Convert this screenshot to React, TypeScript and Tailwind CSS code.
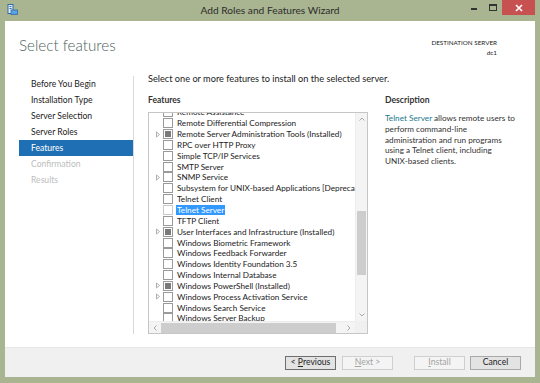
import React from "react";

type Row = { label: string; exp?: boolean; installed?: boolean; selected?: boolean };

const rows: Row[] = [
  { label: "Remote Assistance" },
  { label: "Remote Differential Compression" },
  { label: "Remote Server Administration Tools (Installed)", exp: true, installed: true },
  { label: "RPC over HTTP Proxy" },
  { label: "Simple TCP/IP Services" },
  { label: "SMTP Server" },
  { label: "SNMP Service", exp: true },
  { label: "Subsystem for UNIX-based Applications [Deprecated]" },
  { label: "Telnet Client" },
  { label: "Telnet Server", selected: true },
  { label: "TFTP Client" },
  { label: "User Interfaces and Infrastructure (Installed)", exp: true, installed: true },
  { label: "Windows Biometric Framework" },
  { label: "Windows Feedback Forwarder" },
  { label: "Windows Identity Foundation 3.5" },
  { label: "Windows Internal Database" },
  { label: "Windows PowerShell (Installed)", exp: true, installed: true },
  { label: "Windows Process Activation Service", exp: true },
  { label: "Windows Search Service" },
  { label: "Windows Server Backup" },
];

const navItems = [
  { label: "Before You Begin", state: "normal" },
  { label: "Installation Type", state: "normal" },
  { label: "Server Selection", state: "normal" },
  { label: "Server Roles", state: "normal" },
  { label: "Features", state: "active" },
  { label: "Confirmation", state: "disabled" },
  { label: "Results", state: "disabled" },
];

const font = { fontFamily: 'Lato, "Open Sans", "Liberation Sans", sans-serif' };

function Expander() {
  return (
    <svg width="6" height="7" viewBox="0 0 6 7" className="block">
      <path d="M1.5 1 L4.5 3.5 L1.5 6 Z" fill="none" stroke="#a6a6a6" strokeWidth="0.9" />
    </svg>
  );
}

function Checkbox({ installed, light }: { installed?: boolean; light?: boolean }) {
  return (
    <div
      className={`w-[10px] h-[10px] shrink-0 border bg-white flex items-center justify-center ${
        light ? "border-[#c9c9c9]" : "border-[#9a9a9a]"
      }`}
    >
      {installed && <div className="w-[6px] h-[6px] bg-[#7a7a7a]" />}
    </div>
  );
}

function WinButton({ children, kind }: { children: React.ReactNode; kind: "default" | "disabled" | "normal" }) {
  const cls =
    kind === "default"
      ? "border-[#6e6e6e] bg-[#e3e3e3] text-[#222]"
      : kind === "disabled"
      ? "border-[#cfcfcf] bg-[#f4f4f4] text-[#a3a3a3]"
      : "border-[#a9a9a9] bg-[#e3e3e3] text-[#222]";
  return (
    <div className={`w-[51px] h-[14px] border flex items-center justify-center text-[8.6px] leading-none ${cls}`}>
      {children}
    </div>
  );
}

export default function App() {
  return (
    <div className="w-[540px] h-[383px] bg-[#a9b491] flex flex-col overflow-hidden" style={font}>
      {/* Title bar */}
      <div className="h-[21px] shrink-0 relative flex items-center">
        <div className="absolute left-[7px] top-[4px]">
          <svg width="11" height="11" viewBox="0 0 11 11">
            <rect x="1" y="0.5" width="5" height="9" fill="#e8eef5" stroke="#2f6aa8" strokeWidth="1" />
            <line x1="2.5" y1="2.5" x2="4.5" y2="2.5" stroke="#2f6aa8" strokeWidth="1" />
            <line x1="2.5" y1="4.5" x2="4.5" y2="4.5" stroke="#2f6aa8" strokeWidth="1" />
            <rect x="4" y="6" width="6.5" height="4.5" fill="#5ba3e0" stroke="#2f6aa8" strokeWidth="0.8" />
          </svg>
        </div>
        <div className="flex-1 text-center text-[10.2px] text-[#2d2d2d] pt-[1px]">
          Add Roles and Features Wizard
        </div>
        <div className="absolute right-[5px] top-0 flex items-start">
          <div className="w-[19px] h-[15px] flex items-center justify-center">
            <div className="w-[6px] h-[2px] bg-[#333] mt-[2px]" />
          </div>
          <div className="w-[19px] h-[15px] flex items-center justify-center">
            <div className="w-[8px] h-[7px] border border-[#333] border-t-2" />
          </div>
          <div className="w-[33px] h-[15px] bg-[#c75050] flex items-center justify-center">
            <svg width="8" height="8" viewBox="0 0 8 8">
              <path d="M1 1 L7 7 M7 1 L1 7" stroke="#fff" strokeWidth="1.6" />
            </svg>
          </div>
        </div>
      </div>

      {/* Client */}
      <div className="flex-1 ml-[5px] mr-[5px] mb-[6px] bg-white flex flex-col">
        {/* Header */}
        <div className="h-[49px] shrink-0 flex justify-between pl-[14px] pr-[38px]">
          <div className="pt-[17px] text-[15.2px] font-light leading-none text-[#4e5f5a]">
            Select features
          </div>
          <div className="pt-[17px] text-right text-[6.3px] leading-[10px] text-[#222]">
            <div>DESTINATION SERVER</div>
            <div>dc1</div>
          </div>
        </div>

        {/* Body */}
        <div className="flex-1 flex">
          {/* Nav */}
          <div className="w-[129px] shrink-0 pl-[14px] pt-[6px] flex">
            <div className="flex-1 flex flex-col">
              {navItems.map((n) => (
                <div
                  key={n.label}
                  className={`h-[16px] flex items-center pl-[12px] text-[8.6px] ${
                    n.state === "active"
                      ? "bg-[#1f6fb5] text-white"
                      : n.state === "disabled"
                      ? "text-[#bdbdbd]"
                      : "text-[#222]"
                  }`}
                >
                  {n.label}
                </div>
              ))}
            </div>
            <div className="w-px bg-[#d9d9d9] mb-[13px]" />
          </div>

          {/* Main */}
          <div className="flex-1 flex flex-col pl-[14px]">
            <div className="pt-[3px] h-[21px] text-[9.2px] text-[#222] leading-[12px] whitespace-nowrap">
              Select one or more features to install on the selected server.
            </div>
            <div className="flex gap-[17px]">
              <div className="w-[220px] shrink-0 flex flex-col">
                <div className="h-[21px] text-[8.5px] font-bold text-[#333] leading-[12px] pt-[3px]">Features</div>
                {/* listbox */}
                <div className="h-[222px] border border-[#c6c6c6] flex flex-col">
                  <div className="flex-1 flex min-h-0">
                    <div className="flex-1 overflow-hidden">
                      <div className="mt-[-6px]">
                        {rows.map((r) => (
                          <div key={r.label} className="h-[10.85px] flex items-center whitespace-nowrap">
                            <div className="w-[14px] pl-[6px] shrink-0 flex items-center">
                              {r.exp && <Expander />}
                            </div>
                            <Checkbox installed={r.installed} light={r.selected} />
                            <span
                              className={`ml-[3px] px-[1px] text-[8.2px] leading-[10px] ${
                                r.selected ? "bg-[#3399ff] text-white" : "text-[#222]"
                              }`}
                            >
                              {r.label}
                            </span>
                          </div>
                        ))}
                      </div>
                    </div>
                    {/* vertical scrollbar */}
                    <div className="w-[12px] shrink-0 bg-[#f4f4f4] border-l border-[#ececec] flex flex-col">
                      <div className="h-[12px] flex items-center justify-center">
                        <svg width="6" height="4" viewBox="0 0 6 4">
                          <path d="M0.5 3.5 L3 1 L5.5 3.5" fill="none" stroke="#a0a0a0" strokeWidth="0.9" />
                        </svg>
                      </div>
                      <div className="h-[86px]" />
                      <div className="h-[64px] mx-[1px] bg-[#cdcdcd]" />
                      <div className="flex-1" />
                      <div className="h-[12px] flex items-center justify-center">
                        <svg width="6" height="4" viewBox="0 0 6 4">
                          <path d="M0.5 0.5 L3 3 L5.5 0.5" fill="none" stroke="#a0a0a0" strokeWidth="0.9" />
                        </svg>
                      </div>
                    </div>
                  </div>
                  {/* horizontal scrollbar */}
                  <div className="h-[12px] shrink-0 flex">
                    <div className="flex-1 bg-[#f4f4f4] border-t border-[#ececec] flex items-center">
                      <div className="w-[12px] flex items-center justify-center">
                        <svg width="4" height="6" viewBox="0 0 4 6">
                          <path d="M3.5 0.5 L1 3 L3.5 5.5" fill="none" stroke="#a0a0a0" strokeWidth="0.9" />
                        </svg>
                      </div>
                      <div className="w-[175px] h-[10px] bg-[#cdcdcd]" />
                      <div className="flex-1" />
                      <div className="w-[12px] flex items-center justify-center">
                        <svg width="4" height="6" viewBox="0 0 4 6">
                          <path d="M0.5 0.5 L3 3 L0.5 5.5" fill="none" stroke="#a0a0a0" strokeWidth="0.9" />
                        </svg>
                      </div>
                    </div>
                    <div className="w-[12px] bg-[#f0f0f0]" />
                  </div>
                </div>
              </div>

              {/* Description */}
              <div className="flex-1 flex flex-col">
                <div className="h-[21px] text-[8.6px] font-bold text-[#333] leading-[12px] pt-[3px]">Description</div>
                <div className="pt-[1px] text-[8.2px] leading-[10.8px] text-[#333] whitespace-nowrap">
                  <div>
                    <span className="text-[#1b7a8c]">Telnet Server</span> allows remote users to
                  </div>
                  <div>perform command-line</div>
                  <div>administration and run programs</div>
                  <div>using a Telnet client, including</div>
                  <div>UNIX-based clients.</div>
                </div>
              </div>
            </div>
          </div>
        </div>

        {/* Footer */}
        <div className="h-[30px] shrink-0 bg-[#f0f0f0] border-t border-[#e6e6e6] flex items-center justify-end pr-[14px]">
          <WinButton kind="default">
            &lt;&nbsp;<span className="underline">P</span>revious
          </WinButton>
          <div className="w-[6px]" />
          <WinButton kind="disabled">
            <span className="underline">N</span>ext &gt;
          </WinButton>
          <div className="w-[21px]" />
          <WinButton kind="disabled">
            <span className="underline">I</span>nstall
          </WinButton>
          <div className="w-[5px]" />
          <WinButton kind="normal">Cancel</WinButton>
        </div>
      </div>
    </div>
  );
}
